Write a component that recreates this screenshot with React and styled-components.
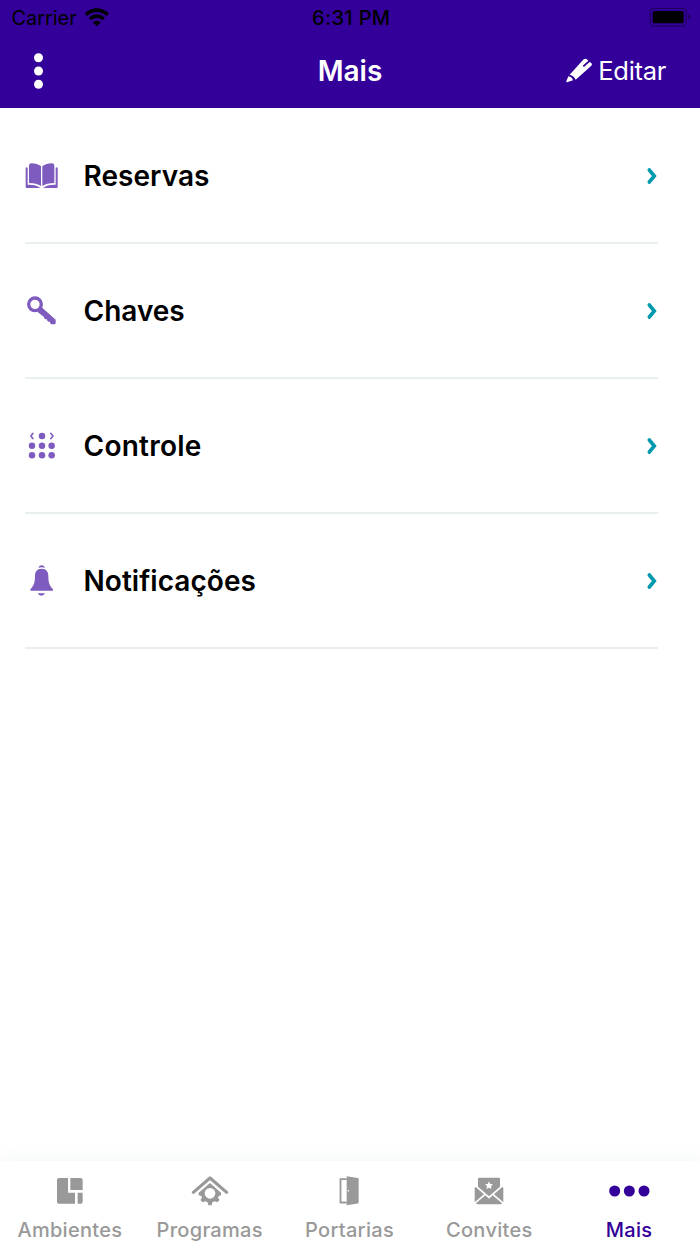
import React from 'react';
import styled, { createGlobalStyle } from 'styled-components';

const GlobalStyle = createGlobalStyle`
    * {
        box-sizing: border-box;
    }

    body {
        margin: 0;
        background: #fff;
        font-family: Inter, "Liberation Sans", sans-serif;
    }
`;

const Screen = styled.div`
    display: flex;
    flex-direction: column;
    width: 700px;
    height: 1244px;
    overflow: hidden;
    background: #fff;
`;

const Header = styled.header`
    flex: none;
    height: 108.3px;
    background: #330099;
`;

const StatusBar = styled.div`
    display: grid;
    grid-template-columns: 1fr auto 1fr;
    align-items: center;
    height: 36px;
    padding: 0 9px 0 11.5px;
    font-size: 20px;
    color: #000;
`;

const Carrier = styled.div`
    display: flex;
    align-items: center;
    gap: 7px;
    letter-spacing: -0.05px;
`;

const Clock = styled.div`
    font-weight: 500;
    letter-spacing: 0.35px;
`;

const Battery = styled.svg`
    justify-self: end;
`;

const NavBar = styled.div`
    display: grid;
    grid-template-columns: 1fr auto 1fr;
    align-items: center;
    height: 70px;
    padding: 0 34px 0 33px;
    color: #fff;
`;

const MenuButton = styled.button`
    display: flex;
    padding: 0;
    border: 0;
    background: none;
`;

const Title = styled.h1`
    margin: 0;
    padding-left: 1px;
    font-size: 28px;
    font-weight: 600;
    line-height: 36px;
`;

const EditButton = styled.button`
    display: flex;
    align-items: center;
    justify-self: end;
    gap: 5px;
    padding: 0;
    border: 0;
    background: none;
    font: inherit;
    font-size: 25.5px;
    line-height: 36px;
    letter-spacing: -0.3px;
    color: #fff;
`;

const List = styled.main`
    flex: 1;
    padding: 0.5px 42px 0 25px;
`;

const Row = styled.div`
    display: flex;
    align-items: center;
    height: 135.1px;
    padding-top: 1.5px;
    border-bottom: 2px solid #e9eeee;
`;

const RowIcon = styled.svg`
    flex: none;
    width: 36px;
    height: 36px;
    margin-left: -1px;
    fill: #7e5bbe;
`;

const RowLabel = styled.div`
    flex: 1;
    padding-left: 23.5px;
    font-size: 28px;
    font-weight: 600;
    line-height: 36px;
    letter-spacing: ${props => props.$spacing || 0}px;
    color: #000;
`;

const Chevron = styled.svg`
    flex: none;
    fill: none;
    stroke: #0099ad;
`;

const TabBar = styled.nav`
    flex: none;
    display: grid;
    grid-template-columns: repeat(5, 1fr);
    height: 83.3px;
    padding-right: 1px;
    background: #fff;
    box-shadow: 0 0 19px rgba(90, 130, 120, 0.09);
`;

const Tab = styled.div`
    display: flex;
    flex-direction: column;
    align-items: center;
    padding-top: 12px;
    font-size: 20px;
    font-weight: 550;
    line-height: 24px;
    letter-spacing: 0.3px;
    color: ${props => props.$active ? '#330099' : '#999'};
`;

const TabIcon = styled.svg`
    width: 44px;
    height: 36px;
    margin-bottom: 9px;
    fill: currentColor;
`;

const BookIcon = () => (
    <RowIcon viewBox="42 24 108 108">
        <path d="M57 47 Q57 40 64 40 Q82 40 93 49 V108 Q80 99 57 99 Z" />
        <path d="M133 47 Q133 40 126 40 Q108 40 97 49 V108 Q110 99 133 99 Z" />
        <path d="M47 53 Q50 51 53 53 V104 Q79 103 91 114 H50 Q47 114 47 111 Z" />
        <path d="M143 53 Q140 51 137 53 V104 Q111 103 99 114 H140 Q143 114 143 111 Z" />
    </RowIcon>
);

const KeyIcon = () => (
    <RowIcon viewBox="42 26 108 108">
        <path fillRule="evenodd" d="M75 36 A24 24 0 1 0 75 84 A24 24 0 1 0 75 36 Z M75 46 A14 14 0 1 1 75 74 A14 14 0 1 1 75 46 Z" />
        <path d="M95 69 L137 106 V116 Q137 120 133 120 H124 L120 116 V112 H115 L111 108 V105 H106 L102 101 V98 L82 82 Z" />
    </RowIcon>
);

const KeypadIcon = () => (
    <RowIcon viewBox="42 26 108 108">
        {[79, 108].map(y => [66, 96, 125].map(x => (
            <circle key={`${x}-${y}`} cx={x} cy={y} r="9.7" />
        )))}
        <circle cx="96" cy="50" r="9.7" />
        <path d="M68.5 42.5 L62.5 50 L68.5 57.5 M122.5 42.5 L129 50 L122.5 57.5" fill="none" stroke="#7e5bbe" strokeWidth="5" strokeLinecap="round" strokeLinejoin="round" />
    </RowIcon>
);

const BellIcon = () => (
    <RowIcon viewBox="42 26 108 108">
        <path d="M85 40 Q88 33 95 33 Q102 33 105 40 Q95 37 85 40 Z" />
        <path d="M95 43 C110 43 115 53 115 65 C115 86 119 94 128 104 Q132 109 126 109 H64 Q58 109 62 104 C71 94 75 86 75 65 C75 53 80 43 95 43 Z" />
        <path d="M83 117 H105 Q102 124 94 124 Q86 124 83 117 Z" />
    </RowIcon>
);

const RoomsIcon = () => (
    <TabIcon viewBox="144 83 132 108">
        <path d="M177 98 H204 V142 H225 V175 H177 Q171 175 171 169 V104 Q171 98 177 98 Z" />
        <path d="M211 98 H242 Q248 98 248 104 V134 H211 Z" />
        <path d="M233 142 H248 V169 Q248 175 242 175 H233 Z" />
    </TabIcon>
);

const ProgramsIcon = () => (
    <TabIcon viewBox="565 83 132 108">
        <path d="M581 141 L631 98 L681 141" fill="none" stroke="currentColor" strokeWidth="9.5" strokeLinecap="round" strokeLinejoin="round" />
        <path fillRule="evenodd" d="M631 113 L664 142 V150 L657 152 L655 157 L660 164 L653 171 L645 168 L638 171 L636 180 H626 L624 171 L617 168 L609 171 L602 164 L607 157 L605 152 L597 150 V142 Z M631 128 A16 16 0 1 0 631 160 A16 16 0 1 0 631 128 Z" />
    </TabIcon>
);

const DoorIcon = () => (
    <TabIcon viewBox="142 83 132 108">
        <path d="M201 101.5 H182.5 V171.5 H201" fill="none" stroke="currentColor" strokeWidth="5.5" />
        <path fillRule="evenodd" d="M201 93 L234 98 Q237 98.5 237 101 V171 Q237 174 234 174.5 L201 180 Z M206 134 A2.5 2.5 0 1 0 206 139 A2.5 2.5 0 1 0 206 134 Z" />
    </TabIcon>
);

const InviteIcon = () => (
    <TabIcon viewBox="562 83 132 108">
        <path fillRule="evenodd" d="M599 97 H657 Q661 97 661 101 V124 L628 153 L595 124 V101 Q595 97 599 97 Z M628 108 L624.5 116 L616 117 L622 123 L620.5 131 L628 127 L635.5 131 L634 123 L640 117 L631.5 116 Z" />
        <path d="M589 126 L613 147 L585 171 V129 Q585 124 589 126 Z" />
        <path d="M667 126 L643 147 L671 171 V129 Q671 124 667 126 Z" />
        <path d="M617 150 L628 160 L639 150 L667 174 Q665 177 662 177 H594 Q591 177 589 174 Z" />
    </TabIcon>
);

const MoreIcon = () => (
    <TabIcon viewBox="142 83 132 108">
        <circle cx="165" cy="137" r="16.5" />
        <circle cx="209" cy="137" r="16.5" />
        <circle cx="253" cy="137" r="16.5" />
    </TabIcon>
);

const rows = [
    { label: 'Reservas', Icon: BookIcon, spacing: 0.05 },
    { label: 'Chaves', Icon: KeyIcon, spacing: 0 },
    { label: 'Controle', Icon: KeypadIcon, spacing: 0.25 },
    { label: 'Notificações', Icon: BellIcon, spacing: 0.05 },
];

const tabs = [
    { label: 'Ambientes', Icon: RoomsIcon },
    { label: 'Programas', Icon: ProgramsIcon },
    { label: 'Portarias', Icon: DoorIcon },
    { label: 'Convites', Icon: InviteIcon },
    { label: 'Mais', Icon: MoreIcon, active: true },
];

const App = () => {

    return (
        <Screen>
            <GlobalStyle />
            <Header>
                <StatusBar>
                    <Carrier>
                        Carrier
                        <svg width="26" height="20" viewBox="253 23 78 60">
                            <path d="M255 39 Q291 9 328 39 L321 47 Q291 23 262 47 Z" />
                            <path d="M267 52 Q291 32 316 52 L309 60 Q291 46 274 60 Z" />
                            <path d="M279 66 Q291 57 304 66 L291 78 Z" />
                        </svg>
                    </Carrier>
                    <Clock>6:31 PM</Clock>
                    <Battery width="42" height="20" viewBox="328 24 126 60">
                        <rect x="331.5" y="25.5" width="108" height="53" rx="12" fill="none" stroke="#1f005c" strokeWidth="3.5" />
                        <rect x="339" y="33" width="93" height="37" rx="5" />
                        <path d="M446 43 Q453 46 453 51 Q453 56 446 60 Z" fill="#1f005c" />
                    </Battery>
                </StatusBar>
                <NavBar>
                    <MenuButton>
                        <svg width="11" height="36" viewBox="0 0 11 36" fill="#fff">
                            <circle cx="5.5" cy="4.8" r="4.5" />
                            <circle cx="5.5" cy="18" r="4.5" />
                            <circle cx="5.5" cy="31.2" r="4.5" />
                        </svg>
                    </MenuButton>
                    <Title>Mais</Title>
                    <EditButton>
                        <svg width="27" height="26" viewBox="17 19 81 78" fill="#fff">
                            <path d="M70 23 Q76 19 81 24 L84 27 L67 42 L71 46 L88 31 L93 34 Q97 38 93 42 L46 84 Q41 72 28 69 Z" />
                            <path d="M24 74 Q35 76 38 86 L20 92 Q17 92 18 89 Z" />
                        </svg>
                        Editar
                    </EditButton>
                </NavBar>
            </Header>
            <List>
                {rows.map(({ label, spacing, Icon }) => (
                    <Row key={label}>
                        <Icon />
                        <RowLabel $spacing={spacing}>{label}</RowLabel>
                        <Chevron width="12" height="20" viewBox="0 0 12 20">
                            <path d="M3.3 4 L8.3 10 L3.3 16" strokeWidth="3.6" strokeLinecap="round" />
                        </Chevron>
                    </Row>
                ))}
            </List>
            <TabBar>
                {tabs.map(({ label, active, Icon }) => (
                    <Tab key={label} $active={active}>
                        <Icon />
                        {label}
                    </Tab>
                ))}
            </TabBar>
        </Screen>
    );
};

export default App;
